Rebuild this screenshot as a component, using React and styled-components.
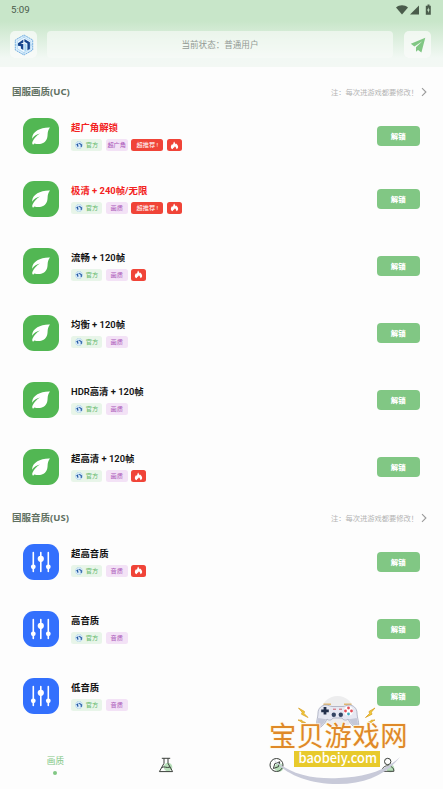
import styled, { createGlobalStyle } from "styled-components";

const GlobalStyle = createGlobalStyle`
  * {
    box-sizing: border-box;
  }

  body {
    margin: 0;
    background: #fdfdfd;
    font-family: Roboto, "Noto Sans CJK SC", sans-serif;
  }
`;

const Page = styled.div`
  position: relative;
  display: flex;
  flex-direction: column;
  width: 443px;
  height: 789px;
  overflow: hidden;
  background: #fdfdfd;
`;

const Header = styled.header`
  height: 67px;
  background: linear-gradient(#c8e6c9 0, #c8e6c9 21px, #f2f8f4 58px, #f3f8f4 67px);
`;

const StatusBar = styled.div`
  display: flex;
  align-items: center;
  justify-content: space-between;
  height: 19px;
  padding: 0 11px 0 11px;
  color: #4a5c4b;
  font-size: 9.7px;
`;

const StatusIcons = styled.svg`
  width: 36px;
  height: 11px;
  margin-top: -1px;
`;

const TopBar = styled.div`
  display: flex;
  gap: 10px;
  margin-top: 12px;
  padding: 0 12px 0 10px;
`;

const SquareButton = styled.button`
  display: flex;
  align-items: center;
  justify-content: center;
  width: 27px;
  height: 27px;
  padding: 0;
  border: none;
  border-radius: 5px;
  background: rgba(249, 251, 250, 0.75);
`;

const UserState = styled.div`
  flex: 1;
  height: 27px;
  margin-right: 1px;
  border-radius: 4px;
  background: rgba(247, 250, 248, 0.65);
  color: #929a94;
  font-size: 8.55px;
  line-height: 29px;
  text-align: center;
`;

const Main = styled.main`
  display: flex;
  flex-direction: column;
  gap: 22.4px;
  height: 673px;
  padding-top: 15px;
`;

const SectionHead = styled.div`
  display: flex;
  align-items: center;
  justify-content: space-between;
  height: 20px;
  margin-bottom: 16px;
  padding: 0 16px 0 12px;
`;

const SectionTitle = styled.h2`
  margin: 0;
  color: #5f7061;
  font-family: "Noto Sans", "Noto Sans CJK SC", sans-serif;
  font-size: 9.5px;
  font-weight: 700;
  line-height: 12px;
`;

const SectionNote = styled.div`
  display: flex;
  align-items: center;
  color: #b4b4b4;
  font-size: 7.3px;
  letter-spacing: -0.05px;

  svg {
    margin-left: 3px;
  }
`;

const Row = styled.div`
  display: flex;
  height: 36px;
  margin: 0 23px ${(props) => props.$space}px;

  &:last-child {
    margin-bottom: 0;
  }
`;

const AppIcon = styled.div`
  width: 36px;
  height: 36px;
  border-radius: 11px;
  background: ${(props) => (props.$kind === "audio" ? "#3370fd" : "#52b753")};
`;

const Info = styled.div`
  flex: 1;
  padding-left: 12px;
`;

const Title = styled.div`
  height: 21px;
  color: ${(props) => (props.$hot ? "#f32121" : "#111")};
  font-size: 9.4px;
  font-weight: ${(props) => (props.$hot ? 700 : 600)};
  line-height: 20px;
`;

const Tags = styled.div`
  display: flex;
  gap: 3.7px;
`;

const Tag = styled.span`
  display: flex;
  align-items: center;
  justify-content: center;
  gap: 3px;
  width: ${(props) => props.$width}px;
  height: 12px;
  border-radius: 2.5px;
  background: ${(props) => props.$bg};
  color: ${(props) => props.$color};
  font-size: 6.2px;
  line-height: 12px;
  white-space: nowrap;
`;

const UnlockButton = styled.button`
  width: 43.5px;
  height: 20px;
  margin-top: 8px;
  padding: 0 0 1px;
  border: none;
  border-radius: 4px;
  background: #81c784;
  color: #fff;
  font-family: inherit;
  font-size: 7.4px;
  font-weight: 900;
`;

const TabBar = styled.nav`
  display: grid;
  grid-template-columns: repeat(4, 110.9px);
  height: 49px;
`;

const Tab = styled.div`
  display: flex;
  flex-direction: column;
  align-items: center;
  padding-top: ${(props) => (props.$active ? "14px" : "17px")};
  color: #81c784;
  font-size: 8.7px;
  line-height: 14px;
`;

const Dot = styled.span`
  width: 4px;
  height: 4px;
  margin-top: 2.5px;
  border-radius: 50%;
  background: #81c784;
`;

const Watermark = styled.svg`
  position: absolute;
  left: 260px;
  top: 690px;
`;

const Leaf = () => (
  <svg width="36" height="36" viewBox="0 0 36 36" fill="#fff">
    <path d="M27 9.400c-5-.2-9.400.9-12.600 2.900-3.400 2.100-5.300 4.700-5.300 8.500 2-2.800 4.600-4.400 7.900-5.200-3.300 2-5.700 4.500-7.400 8-.5 1.200-.5 2.200 0 2.700.6.5 1.300.1 1.700-.9 3.300.9 6.800.8 9.300-.7 3.300-2.100 3.900-5.200 4-8.300.1-2.700.8-5 2.400-7z" />
  </svg>
);

const Sliders = () => (
  <svg width="36" height="36" viewBox="0 0 36 36" fill="#fff">
    <path d="M10.300 8.500v19M17.800 8.500v19M25.300 8.500v19" stroke="#fff" strokeWidth="1.6" strokeLinecap="round" />
    <circle cx="10.3" cy="22.8" r="2.4" />
    <circle cx="17.8" cy="14.8" r="3.1" />
    <circle cx="25.3" cy="22.8" r="2.4" />
  </svg>
);

const HexLogo = () => (
  <svg width="20" height="22" viewBox="0 0 20 22">
    <path d="M10 1l8.700 5v10L10 21l-8.700-5V6z" fill="#dceffc" stroke="#74aee0" strokeWidth="1" strokeDasharray="2 .6" />
    <path d="M10 3.300l6.600 3.900v7.600L10 18.700l-6.600-3.900V7.200z" fill="#eef8ff" stroke="#9fcdf0" strokeWidth=".6" />
    <path d="M1.500 11H4M16 11h2.500M10 1v3M10 18v3" stroke="#9ac7ea" strokeWidth=".7" />
    <path d="M4 9.300L9.300 5.600v2.800L6.500 9.900l2.800.1v6L6.900 14.600v-2.300L4 11.800zM10.400 5l5.500 3.300v6.600l-2.500 1.300V9.400l-3-1.600z" fill="#17458d" />
    <path d="M10.400 9.300l2.100 1.200v6l-2.100 1.200z" fill="#a5d4f2" />
  </svg>
);

const Badge = () => (
  <svg width="8" height="8" viewBox="0 0 8 8">
    <circle cx="4" cy="4" r="3.6" fill="#dceefa" stroke="#8fc0e6" strokeWidth=".6" strokeDasharray="1 .6" />
    <path d="M1 3.800l2.400-1.900v1.200l-.7.6.6.2v2.200l-1.100-.5v-1.200zM4.200 1.800l2.600 1.500v2.500l-1.100.5V3.700l-1.500-.8z" fill="#174f9c" />
  </svg>
);

const Fire = () => (
  <svg width="9" height="9" viewBox="0 0 9 9">
    <path d="M2.600 8.200C1 7.500.6 6.200 1 4.900c.3-.8.900-1.200 1.200-1.800.3.400.5.7.6 1.200C3.300 3.200 3.300 2 4.100.6c.7 1 1.100 1.900 1.600 2.600.2-.2.300-.5.400-.8 1.600 1.300 2.300 2.600 2 4-.2.900-.8 1.500-1.700 1.800.1-1-.5-2-1.500-2.900-.2.600-.4.900-.8 1.200-.8.500-1.400 1-1.500 1.700z" fill="#fff" />
  </svg>
);

const Plane = () => (
  <svg width="16" height="16" viewBox="0 0 16 16" fill="#81c784">
    <path d="M15.300.8L.8 6.800l3.600 2.600L12.300 4.200 6 10.300v4.400l2-1.700 3.400 2.500z" />
  </svg>
);

const Chevron = () => (
  <svg width="6" height="10" viewBox="0 0 6 10">
    <path d="M1 1.200L4.900 5 1 8.800" fill="none" stroke="#9b9b9b" strokeWidth="1.1" />
  </svg>
);

const Flask = () => (
  <svg width="16" height="16" viewBox="0 0 16 16" fill="none">
    <circle cx="10" cy="10" r="4.3" fill="#b7dfb9" />
    <path d="M3.800 1.300h8.400M6 1.300v5L1.400 14.600h13.200L10 6.300v-5M3.700 10.500c3-1.700 4.800 1 8.300-.5" stroke="#3a3f3a" strokeWidth="1" />
  </svg>
);

const Compass = () => (
  <svg width="16" height="16" viewBox="0 0 16 16" fill="none">
    <circle cx="10" cy="10.500" r="4.300" fill="#b7dfb9" />
    <circle cx="7.500" cy="8" r="6.500" stroke="#3a3f3a" />
    <path d="M10.800 4.800L9.400 9.700l-5 1.800 1.400-4.900z" stroke="#3a3f3a" />
  </svg>
);

const User = () => (
  <svg width="16" height="16" viewBox="0 0 16 16" fill="none">
    <circle cx="10.500" cy="11.500" r="3.800" fill="#b7dfb9" />
    <circle cx="7.700" cy="4.500" r="3.200" stroke="#3a3f3a" />
    <path d="M2.200 14.300c-.4-3.200 2.100-5.500 5.500-5.500s6.500 2.200 6.200 5.500z" stroke="#3a3f3a" />
  </svg>
);

const SiteMark = () => (
  <Watermark width="160" height="99" viewBox="260 690 160 99">
    <circle cx="337.5" cy="712.5" r="16.5" fill="#ededee" />
    <path d="M273 759c19 17 42 20 66 19 24-1 45-6 61-21-13 17-34 27-62 27-29 0-52-9-65-25z" fill="#c8cad9" />
    <path d="M323.500 704.200h7.500M344 704.200h7.500" stroke="#e2b66d" strokeWidth="1.600" />
    <path d="M318 713c0-5 4-8 8-8 3 0 4 1.500 6 1.500h11c2 0 3-1.500 6-1.500 4 0 8 3 8 8 0 5 3 11 1 14-3 2-7-2-10-8-2 2-5 1-6-1h-9c-1 2-4 3-6 1-3 6-7 10-9 8-3-3 0-9 0-14z" fill="#e6e8f2" stroke="#a5a9bd" strokeWidth=".8" />
    <path d="M318.300 718c-1 3-2 7-.6 9 2 1 5-2 8.500-7.800zM356.700 718c1 3 2 7 .6 9-2 1-5-2-8.500-7.800z" fill="#c5c8d8" />
    <path d="M325 707v7.600M321.200 710.800h7.600" stroke="#22304b" strokeWidth="2.800" />
    <circle cx="348.5" cy="711" r="4.7" fill="#fff" />
    <circle cx="348.5" cy="708" r="1.4" fill="#e44e58" />
    <circle cx="351.5" cy="711" r="1.4" fill="#e44e58" />
    <circle cx="348.5" cy="714" r="1.4" fill="#3eacc2" />
    <circle cx="345.5" cy="711" r="1.4" fill="#e44e58" />
    <path d="M333 709.200h3M339 709.200h3" stroke="#d15b67" strokeWidth="1" />
    <circle cx="333.8" cy="714.7" r="2.2" fill="#344562" />
    <circle cx="340.8" cy="714.7" r="2.2" fill="#344562" />
    <path d="M298.500 708l6 3.500-.5 2 4 4-6.500-3.300.7-2zM375 708l-6 3.500.5 2-4 4 6.500-3.300-.7-2zM298 720l4 .3.500 1.200 3 1-4-.1-.8-1zM375 720l-4 .3-.5 1.200-3 1 4-.1.800-1z" fill="#f3cd36" stroke="#d9a22c" strokeWidth=".8" />
    <text
      x="269"
      y="746.2"
      fontSize="27.3"
      fontWeight="400"
      textLength="138.5"
      fontFamily="Liberation Sans, Noto Sans CJK SC, sans-serif"
      fill="#df8928"
      stroke="#fff8e5"
      strokeWidth="1.4"
      paintOrder="stroke"
    >
      宝贝游戏网
    </text>
    <rect x="294" y="751" width="86" height="16" fill="#e8ca2c" />
    <text x="298.5" y="763.2" fontSize="13.7" fontWeight="500" textLength="78.5" lengthAdjust="spacingAndGlyphs" fontFamily="Noto Sans CJK SC, sans-serif" fill="#fff">
      baobeiy.com
    </text>
  </Watermark>
);

const sections = [
  {
    title: "国服画质(UC)",
    kind: "video",
    rows: [
      { title: "超广角解锁", tag: "超广角", best: true, fire: true, space: 26.8 },
      { title: "极清 + 240帧/无限", tag: "画质", best: true, fire: true },
      { title: "流畅 + 120帧", tag: "画质", fire: true },
      { title: "均衡 + 120帧", tag: "画质" },
      { title: "HDR高清 + 120帧", tag: "画质" },
      { title: "超高清 + 120帧", tag: "画质", fire: true },
    ],
  },
  {
    title: "国服音质(US)",
    kind: "audio",
    rows: [
      { title: "超高音质", tag: "音质", fire: true },
      { title: "高音质", tag: "音质" },
      { title: "低音质", tag: "音质" },
    ],
  },
];

const App = () => {
  return (
    <Page>
      <GlobalStyle />
      <Header>
        <StatusBar>
          <span>5:09</span>
          <StatusIcons viewBox="0 0 36 11" fill="#4a5c4b">
            <path d="M0 3.400c3.300-3 8.700-3 12 0L6 10.400z" />
            <path d="M23 1.400v9h-9z" />
            <path d="M31.500.6h2v1.100h1.300v9h-5v-9h1.700z" />
            <path d="M32.800 3.200l-1.800 3.200h1.100v2.500l1.600-3.300h-1z" fill="#c8e6c9" />
          </StatusIcons>
        </StatusBar>
        <TopBar>
          <SquareButton>
            <HexLogo />
          </SquareButton>
          <UserState>当前状态：普通用户</UserState>
          <SquareButton>
            <Plane />
          </SquareButton>
        </TopBar>
      </Header>

      <Main>
        {sections.map((section) => (
          <section key={section.title}>
            <SectionHead>
              <SectionTitle>{section.title}</SectionTitle>
              <SectionNote>
                注：每次进游戏都要修改！
                <Chevron />
              </SectionNote>
            </SectionHead>
            {section.rows.map((row) => (
              <Row key={row.title} $space={row.space || 31.15}>
                <AppIcon $kind={section.kind}>
                  {section.kind === "audio" ? <Sliders /> : <Leaf />}
                </AppIcon>
                <Info>
                  <Title $hot={row.best}>{row.title}</Title>
                  <Tags>
                    <Tag $width={31} $bg="#e8f5e9" $color="#66b96a">
                      <Badge />
                      官方
                    </Tag>
                    <Tag $width={22} $bg="#f3e2f6" $color="#a955b8">
                      {row.tag}
                    </Tag>
                    {row.best && (
                      <Tag $width={32} $bg="#f04438" $color="#fff">
                        超推荐 !
                      </Tag>
                    )}
                    {row.fire && (
                      <Tag $width={14.5} $bg="#f04438">
                        <Fire />
                      </Tag>
                    )}
                  </Tags>
                </Info>
                <UnlockButton>解锁</UnlockButton>
              </Row>
            ))}
          </section>
        ))}
      </Main>

      <TabBar>
        <Tab $active>
          画质
          <Dot />
        </Tab>
        <Tab>
          <Flask />
        </Tab>
        <Tab>
          <Compass />
        </Tab>
        <Tab>
          <User />
        </Tab>
      </TabBar>
      <SiteMark />
    </Page>
  );
};

export default App;
